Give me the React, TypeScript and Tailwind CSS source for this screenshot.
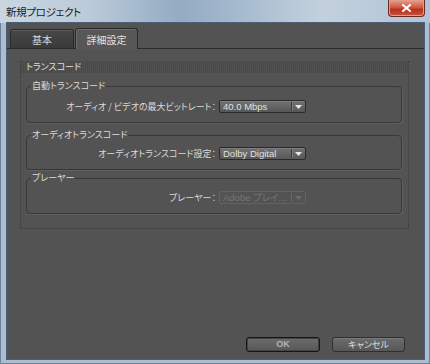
import React from "react";

const groups = [
  { title: "自動トランスコード", label: "オーディオ / ビデオの最大ビットレート：", value: "40.0 Mbps", wrap: "mt-[7px]", body: "pt-[8px] pb-[9px]" },
  { title: "オーディオトランスコード", label: "オーディオトランスコード設定：", value: "Dolby Digital", wrap: "mt-[6px]", body: "pt-[6px] pb-[9px]" },
  { title: "プレーヤー", label: "プレーヤー：", value: "Adobe プレイ...", wrap: "mt-[2px]", body: "pt-[7px] pb-[9px]", disabled: true },
];

function Dropdown({ value, disabled }: { value: string; disabled?: boolean }) {
  return (
    <div
      className={
        disabled
          ? "ml-[3px] w-[87px] h-[13px] flex items-center rounded-[2px] border border-[#626262] bg-[#535353] text-[#767676]"
          : "ml-[3px] w-[87px] h-[13px] flex items-center rounded-[2px] border border-[#2a2a2a] bg-[linear-gradient(#727272,#575757)] text-[#e0e0e0] shadow-[inset_0_1px_0_#7e7e7e]"
      }
    >
      <span className="flex-1 pl-[3px] text-[9.5px] leading-[11px] whitespace-nowrap overflow-hidden font-['Liberation_Sans','Noto_Sans_CJK_JP',sans-serif]">
        {value}
      </span>
      <span className={disabled ? "h-[9px] border-l border-[#686868]" : "h-[9px] border-l border-[#3a3a3a] shadow-[1px_0_0_#7a7a7a]"} />
      <span className="w-[13px] flex justify-center">
        <svg width="7" height="4" viewBox="0 0 7 4">
          <path d="M0 0h7L3.5 4z" fill={disabled ? "#6c6c6c" : "#e8e8e8"} />
        </svg>
      </span>
    </div>
  );
}

export default function App() {
  return (
    <div className="w-[430px] h-[364px] flex flex-col bg-[#aabdd1] shadow-[inset_0_0_0_1px_#6d8298] font-['Noto_Sans_CJK_JP',sans-serif] [font-feature-settings:'palt']">
      {/* title bar */}
      <div className="h-[23px] flex items-start justify-between bg-[linear-gradient(90deg,#c9d6e2_0%,#bccbda_20%,#94abc3_42%,#a5b9cd_55%,#c3d1de_75%,#b1c3d5_100%)]">
        <div className="pl-[6px] pt-[5px] text-[10.5px] leading-[13px] tracking-[-0.3px] text-[#1c1c1c]">
          新規プロジェクト
        </div>
        <div className="mr-[5px] w-[37px] h-[17px] flex items-center justify-center rounded-b-[4px] border border-t-0 border-[#6b2a20] bg-[linear-gradient(#e1a393,#cf5a44_45%,#b8321d_60%,#c9553c)] shadow-[inset_0_0_0_1px_#e69a88]">
          <svg width="9" height="8" viewBox="0 0 9 8">
            <path d="M1 1l7 6M8 1L1 7" stroke="#ffffff" strokeWidth="2" strokeLinecap="square" />
          </svg>
        </div>
      </div>

      {/* client area */}
      <div className="ml-[7px] mr-[6px] mb-[5px] h-[336px] flex flex-col bg-[#535353] shadow-[0_0_0_1px_#4b5f75] text-[#dadada]">
        <div className="h-[26px] pl-[3px] flex items-end gap-[1px] border-b border-[#2c2c2c]">
          <div className="w-[64px] h-[19px] flex items-center justify-center rounded-t-[3px] border border-b-0 border-[#2a2a2a] bg-[linear-gradient(#474747,#3a3a3a)] shadow-[inset_0_1px_0_#5e5e5e] text-[10px] text-[#d6d6d6]">
            基本
          </div>
          <div className="w-[63px] h-[21px] -mb-[1px] flex items-center justify-center rounded-t-[3px] border border-b-0 border-[#2a2a2a] bg-[#575757] shadow-[inset_1px_1px_0_#6c6c6c] text-[10px] text-[#e2e2e2]">
            詳細設定
          </div>
        </div>

        <div className="mt-[12px] ml-[13px] w-[389px] pb-[14px] border-x border-b border-dotted border-[#3a3a3a]">
          <div className="h-[12px] pl-[5px] text-[9px] leading-[12px] text-[#e0e0e0] bg-[repeating-linear-gradient(90deg,#4a4a4a_0px,#4a4a4a_1px,#505050_1px,#505050_2px)]">
            トランスコード
          </div>
          {groups.map((g, i) => (
            <fieldset
              key={i}
              className={`${g.wrap} ml-[5px] w-[376px] rounded-[4px] border border-[#383838] shadow-[1px_1px_0_#606060] ${g.body}`}
            >
              <legend className="ml-[4px] px-[1px] text-[9px] leading-[12px] text-[#dcdcdc]">{g.title}</legend>
              <div className="flex items-center h-[13px]">
                <div className="w-[189px] text-right text-[9px] leading-[12px] whitespace-nowrap">{g.label}</div>
                <Dropdown value={g.value} disabled={g.disabled} />
              </div>
            </fieldset>
          ))}
        </div>

        <div className="mt-auto pb-[7px] pr-[19px] flex justify-end gap-[12px]">
          <button
            type="button"
            className="w-[74px] h-[15px] rounded-[3px] border border-[#151515] bg-[linear-gradient(#6c6c6c,#575757)] shadow-[inset_0_0_0_1px_#444] text-[9px] leading-[13px] text-[#b4b4b4] font-['Liberation_Sans',sans-serif] font-bold"
          >
            OK
          </button>
          <button
            type="button"
            className="w-[73px] h-[15px] rounded-[3px] border border-[#2e2e2e] bg-[linear-gradient(#6c6c6c,#575757)] shadow-[inset_0_1px_0_#7a7a7a] text-[9px] leading-[13px] text-[#dedede]"
          >
            キャンセル
          </button>
        </div>
      </div>
    </div>
  );
}
